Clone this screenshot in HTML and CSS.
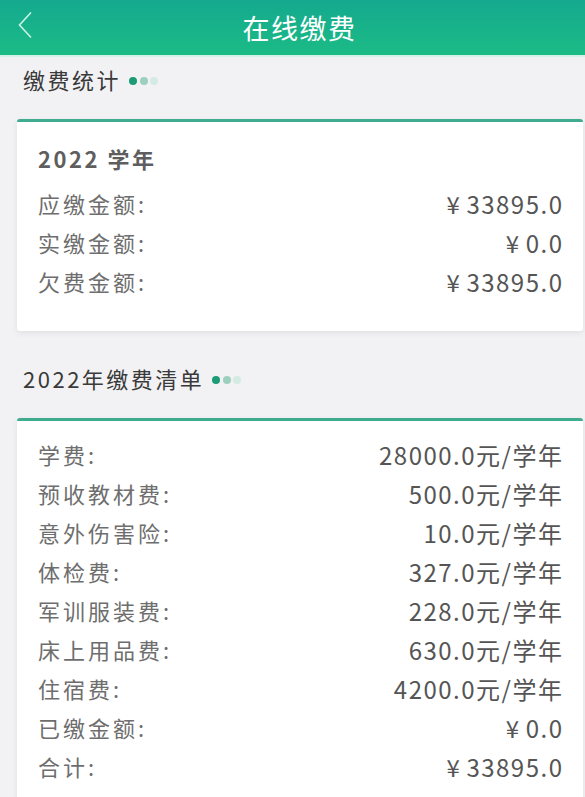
FILE: index.html
```html
<!DOCTYPE html>
<html lang="zh-CN">
<head>
<meta charset="utf-8">
<title>在线缴费</title>
<link rel="stylesheet" href="styles.css">
</head>
<body>
<header class="topbar">
  <svg class="back" width="16" height="28" viewBox="0 0 16 28"><polyline points="14,1.5 2.5,14 14,26.5" fill="none" stroke="#c9f3e4" stroke-width="1.6"/></svg>
  <h1 class="title">在线缴费</h1>
</header>
<main class="content">
  <h2 class="section-title">缴费统计<span class="dots"><i class="d1"></i><i class="d2"></i><i class="d3"></i></span></h2>
  <section class="card card-summary">
    <div class="year">2022 学年</div>
    <div class="row"><span class="label">应缴金额:</span><span class="value"><span class="yen">¥</span>33895.0</span></div>
    <div class="row"><span class="label">实缴金额:</span><span class="value"><span class="yen">¥</span>0.0</span></div>
    <div class="row"><span class="label">欠费金额:</span><span class="value"><span class="yen">¥</span>33895.0</span></div>
  </section>
  <h2 class="section-title second">2022年缴费清单<span class="dots"><i class="d1"></i><i class="d2"></i><i class="d3"></i></span></h2>
  <section class="card card-list">
    <div class="row"><span class="label">学费:</span><span class="value">28000.0元/学年</span></div>
    <div class="row"><span class="label">预收教材费:</span><span class="value">500.0元/学年</span></div>
    <div class="row"><span class="label">意外伤害险:</span><span class="value">10.0元/学年</span></div>
    <div class="row"><span class="label">体检费:</span><span class="value">327.0元/学年</span></div>
    <div class="row"><span class="label">军训服装费:</span><span class="value">228.0元/学年</span></div>
    <div class="row"><span class="label">床上用品费:</span><span class="value">630.0元/学年</span></div>
    <div class="row"><span class="label">住宿费:</span><span class="value">4200.0元/学年</span></div>
    <div class="row"><span class="label">已缴金额:</span><span class="value"><span class="yen">¥</span>0.0</span></div>
    <div class="row"><span class="label">合计:</span><span class="value"><span class="yen">¥</span>33895.0</span></div>
  </section>
</main>
</body>
</html>
```

FILE: styles.css
```css
html, body {
  margin: 0;
  padding: 0;
}
body {
  background: #f2f2f4;
  font-family: "Noto Sans CJK SC", "Noto Sans", sans-serif;
  width: 585px;
  height: 797px;
  overflow: hidden;
}
.topbar {
  height: 55px;
  background: linear-gradient(180deg, #14a98f 0%, #1cbb85 100%);
  border-bottom: 2px solid #d4f3e8;
  display: flex;
  align-items: center;
  justify-content: center;
  position: relative;
}
.back {
  position: absolute;
  left: 17px;
  top: 11px;
}
.title {
  margin: 0 0 0 14px;
  color: #ffffff;
  font-size: 27px;
  font-weight: 400;
  letter-spacing: 1.5px;
  line-height: 55px;
}
.content {
  padding: 3px 2px 0 17px;
}
.section-title {
  margin: 0;
  padding-left: 6px;
  height: 39px;
  line-height: 39px;
  font-size: 22px;
  font-weight: 400;
  color: #3a3a3a;
  letter-spacing: 2.5px;
  display: flex;
  align-items: center;
}
.section-title.second {
  margin-top: 28px;
}
.dots {
  display: inline-flex;
  gap: 2.5px;
  margin-left: 8px;
  margin-top: 2px;
}
.dots i {
  display: block;
  width: 8px;
  height: 8px;
  border-radius: 50%;
}
.dots .d1 { background: #1b9c76; }
.dots .d2 { background: #9ccfbd; }
.dots .d3 { background: #d3ebe2; }
.card {
  margin-top: 20px;
  background: #ffffff;
  border-top: 3px solid #3fab8f;
  border-radius: 3px;
  box-shadow: 0 2px 6px rgba(0, 0, 0, 0.08);
  padding: 0 21px;
}
.card-summary {
  padding-top: 17px;
  padding-bottom: 30px;
}
.card-list {
  padding-top: 14px;
  padding-bottom: 20px;
}
.year {
  height: 39px;
  line-height: 39px;
  font-size: 22px;
  font-weight: 700;
  color: #5e5e5e;
  letter-spacing: 2.5px;
  margin-bottom: 6px;
}
.row {
  display: flex;
  justify-content: space-between;
  align-items: center;
  height: 39px;
  line-height: 39px;
}
.label {
  color: #6e6e6e;
  font-size: 22px;
  letter-spacing: 3px;
}
.value {
  color: #555555;
  font-size: 24px;
  letter-spacing: 1.5px;
  margin-right: -1.5px;
}
.yen {
  margin-right: 5px;
}
```
